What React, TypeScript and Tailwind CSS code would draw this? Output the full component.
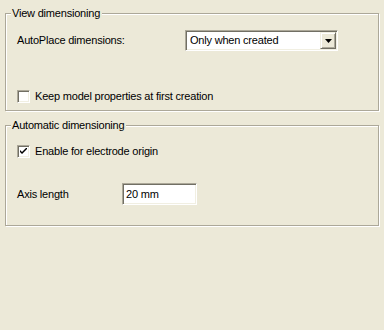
import React from "react";

const font = "font-['Liberation_Sans',Arial,sans-serif] text-[11px] leading-[13px] tracking-[-0.2px] text-black";

// sunken 3D edge used by checkbox / combo / edit fields
const sunken =
  "border border-t-[#aca899] border-l-[#aca899] border-r-white border-b-white shadow-[inset_1px_1px_0_#716f64,inset_-1px_-1px_0_#f1efe2]";

const GroupBox = ({
  title,
  className,
  children,
}: {
  title: string;
  className?: string;
  children: React.ReactNode;
}) => (
  <div
    className={`relative w-[374px] border border-[#aca899] shadow-[inset_1px_1px_0_#fff,1px_1px_0_#fff] ${className ?? ""}`}
  >
    <div className="absolute left-[5px] top-[-7px] bg-[#ece9d8] pl-[1px] pr-[2px]">{title}</div>
    {children}
  </div>
);

const Checkbox = ({ checked, label }: { checked?: boolean; label: string }) => (
  <div className="flex h-[13px] items-center pl-[11px]">
    <div className={`relative h-[13px] w-[13px] shrink-0 bg-white ${sunken}`}>
      {checked && (
        <svg className="absolute left-[2px] top-[2px]" width="7" height="7" viewBox="0 0 7 7">
          <path d="M0 2 L0 4 L2 6 L7 1 L7 -1 L2 4 Z" fill="#000" />
        </svg>
      )}
    </div>
    <span className="ml-[5px]">{label}</span>
  </div>
);

export default function App() {
  return (
    <div className={`h-[330px] w-[384px] bg-[#ece9d8] pl-[5px] pt-[13px] ${font}`}>
      <GroupBox title="View dimensioning" className="h-[98px] pt-[16px]">
        <div className="flex h-[21px] items-center pl-[11px]">
          <span className="w-[168px]">AutoPlace dimensions:</span>
          <div className={`flex h-[21px] w-[153px] items-center bg-white pl-[4px] ${sunken}`}>
            <span className="flex-1">Only when created</span>
            <div className="mr-[1px] flex h-[17px] w-[16px] items-center justify-center border border-t-[#f1efe2] border-l-[#f1efe2] border-r-[#716f64] border-b-[#716f64] bg-[#ece9d8] shadow-[inset_1px_1px_0_#fff,inset_-1px_-1px_0_#aca899]">
              <svg width="7" height="4" viewBox="0 0 7 4">
                <path d="M0 0 H7 L3.5 4 Z" fill="#000" />
              </svg>
            </div>
          </div>
        </div>
        <div className="mt-[39px]">
          <Checkbox label="Keep model properties at first creation" />
        </div>
      </GroupBox>

      <GroupBox title="Automatic dimensioning" className="mt-[14px] h-[101px] pt-[19px]">
        <Checkbox checked label="Enable for electrode origin" />
        <div className="mt-[25px] flex h-[22px] items-center pl-[11px]">
          <span className="w-[105px]">Axis length</span>
          <div className={`flex h-[22px] w-[75px] items-center bg-white pl-[3px] ${sunken}`}>20 mm</div>
        </div>
      </GroupBox>
    </div>
  );
}
